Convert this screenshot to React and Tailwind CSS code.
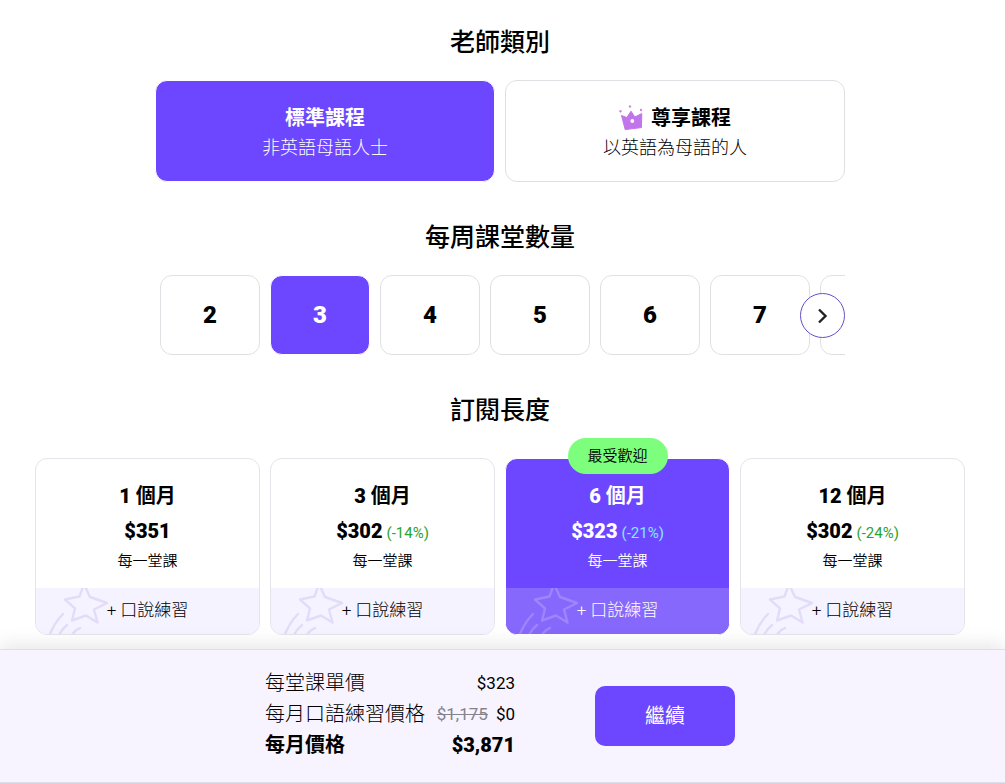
import React, { useState } from "react";

const teachers = [
  { id: "standard", title: "標準課程", note: "非英語母語人士" },
  { id: "premium", title: "尊享課程", note: "以英語為母語的人", crown: true },
];

const lessonCounts = [2, 3, 4, 5, 6, 7];

const plans = [
  { months: 1, price: "$351" },
  { months: 3, price: "$302", discount: "(-14%)" },
  { months: 6, price: "$323", discount: "(-21%)", popular: true },
  { months: 12, price: "$302", discount: "(-24%)" },
];

const Crown = () => (
  <svg className="w-6 h-7" viewBox="0 0 24 28" fill="none" aria-hidden="true">
    <path
      d="M2.5 11.5 L7.8 13.5 L12 7.2 L15.8 13 L22.8 9.6 L22.4 23.6 L6.2 25.6 Z"
      fill="#c274ea"
      stroke="#c274ea"
      strokeWidth="1"
      strokeLinejoin="round"
    />
    <circle cx="13.3" cy="17" r="1.9" fill="#fff" />
    <circle cx="1.5" cy="7.3" r="1.2" fill="#c98be0" />
    <circle cx="11" cy="2.5" r="1.2" fill="#c98be0" />
    <circle cx="22" cy="6" r="1.2" fill="#c98be0" />
  </svg>
);

const ShootingStar = ({ color }) => (
  <svg
    className="absolute left-0 top-0 w-20 h-full"
    viewBox="0 0 80 46"
    preserveAspectRatio="xMinYMin slice"
    fill="none"
    stroke={color}
    strokeWidth="2.4"
    strokeLinecap="round"
    strokeLinejoin="round"
    aria-hidden="true"
  >
    <path d="M29 11.5 L43.5 8.5 L48 -4 L54 9 L71 15 L58 21.5 L61.5 34.5 L50 27.5 L36 32.5 L39 20.5 Z" />
    <path d="M27 26 Q19 34 14 46" />
    <path d="M31 37 Q26 41 23 47" />
    <path d="M44 40 Q39 42 36 47" />
  </svg>
);

const SectionTitle = ({ children }) => (
  <h2 className="text-[25px] leading-9 font-medium text-center text-black">{children}</h2>
);

const App = () => {
  const [teacher, setTeacher] = useState("standard");
  const [lessons, setLessons] = useState(3);
  const [months, setMonths] = useState(6);

  return (
    <div className="min-h-screen flex flex-col bg-white text-black font-['Roboto','Noto_Sans_CJK_TC',sans-serif]">
      <main className="grow pt-[25px] pr-[5px] pb-[14px]">
        <div className="max-w-[930px] mx-auto">
          <section className="max-w-[690px] mx-auto">
            <SectionTitle>老師類別</SectionTitle>
            <div className="mt-[19px] grid grid-cols-2 gap-2.5">
              {teachers.map((t) => (
                <button
                  key={t.id}
                  type="button"
                  aria-pressed={teacher === t.id}
                  onClick={() => setTeacher(t.id)}
                  className={`h-[102px] pt-1 rounded-xl border flex flex-col items-center justify-center ${
                    teacher === t.id
                      ? "bg-[#6c47ff] border-white text-white"
                      : "bg-white border-[#e0e0e4]"
                  }`}
                >
                  <span className="flex items-center gap-2 text-xl leading-[30px] font-bold">
                    {t.crown && <Crown />}
                    {t.title}
                  </span>
                  <span className="text-lg leading-[30px] font-light">{t.note}</span>
                </button>
              ))}
            </div>
          </section>

          <section className="max-w-[690px] mx-auto mt-[38px]">
            <SectionTitle>每周課堂數量</SectionTitle>
            <div className="relative mt-[19px]">
              <div className="flex gap-2.5 pl-[5px] overflow-hidden">
                {lessonCounts.map((n) => (
                  <button
                    key={n}
                    type="button"
                    aria-pressed={lessons === n}
                    onClick={() => setLessons(n)}
                    className={`w-[100px] h-20 shrink-0 rounded-xl border text-2xl font-black ${
                      lessons === n
                        ? "bg-[#6c47ff] border-white text-white"
                        : "bg-white border-[#e0e0e4]"
                    }`}
                  >
                    {n}
                  </button>
                ))}
                {/* edge of the next card */}
                <div className="w-[100px] h-20 shrink-0 rounded-xl border border-[#e0e0e4]" />
              </div>
              <button
                type="button"
                aria-label="更多"
                className="absolute right-0 top-[18px] w-[45px] h-[45px] rounded-full border border-[#6350c8] bg-white flex items-center justify-center"
              >
                <svg className="w-4 h-4" viewBox="0 0 16 16" fill="none" stroke="#222" strokeWidth="2.4">
                  <path d="M4 1.5 L10.5 8 L4 14.5" />
                </svg>
              </button>
            </div>
          </section>

          <section className="mt-[38px]">
            <SectionTitle>訂閱長度</SectionTitle>
            <div className="mt-[29px] grid grid-cols-4 gap-2.5">
              {plans.map((p) => {
                const active = months === p.months;
                return (
                  <button
                    key={p.months}
                    type="button"
                    aria-pressed={active}
                    onClick={() => setMonths(p.months)}
                    className={`relative h-[177px] rounded-xl border flex flex-col ${
                      active ? "bg-[#6c47ff] border-white text-white" : "bg-white border-[#e4e4ea]"
                    }`}
                  >
                    {p.popular && (
                      <span className="absolute -top-[21px] left-1/2 -translate-x-1/2 w-[100px] h-9 rounded-full bg-[#7dff7d] text-black text-[15px] leading-9 font-[350]">
                        最受歡迎
                      </span>
                    )}
                    <span className="w-full grow flex flex-col items-center pt-[19px]">
                      <span className="text-xl leading-9 font-bold">
                        <span className="font-black">{p.months}</span> 個月
                      </span>
                      <span className="h-[35px] flex items-baseline gap-1 text-xl leading-[34px] font-black">
                        {p.price}
                        {p.discount && (
                          <span
                            className={`text-[15px] leading-none font-normal ${active ? "text-[#83e9f5]" : "text-[#2aa32f]"}`}
                          >
                            {p.discount}
                          </span>
                        )}
                      </span>
                      <span className="text-[15px] leading-6 font-[350]">每一堂課</span>
                    </span>
                    <span
                      className={`relative w-full h-[46px] rounded-b-[11px] overflow-hidden flex items-center justify-center text-[17px] font-light ${
                        active ? "bg-[#8768fc]" : "bg-[#f5f3ff]"
                      }`}
                    >
                      <ShootingStar color={active ? "#9d85fc" : "#e2dcf8"} />
                      <span className="relative">+ 口說練習</span>
                    </span>
                  </button>
                );
              })}
            </div>
          </section>
        </div>
      </main>

      <footer className="sticky bottom-0 border-y border-[#e0dfe8] bg-[#f7f4ff] shadow-[0_-4px_18px_rgba(0,0,0,0.1)]">
        <div className="flex items-center justify-center gap-20 pr-[5px] py-[18px]">
          <dl className="w-[250px] pb-[3px]">
            <div className="flex justify-between text-xl leading-[31px] font-light">
              <dt>每堂課單價</dt>
              <dd className="text-[17px] leading-[31px] font-normal">$323</dd>
            </div>
            <div className="flex justify-between text-xl leading-[31px] font-light">
              <dt>每月口語練習價格</dt>
              <dd className="text-[17px] leading-[31px] font-normal">
                <s className="mr-2 text-[#85838c]">$1,175</s>$0
              </dd>
            </div>
            <div className="flex justify-between text-xl leading-[31px] font-bold">
              <dt>每月價格</dt>
              <dd className="font-black">$3,871</dd>
            </div>
          </dl>
          <button
            type="button"
            className="w-[140px] h-[60px] rounded-[10px] bg-[#6c47ff] text-white text-xl"
          >
            繼續
          </button>
        </div>
      </footer>
    </div>
  );
};

export default App;
